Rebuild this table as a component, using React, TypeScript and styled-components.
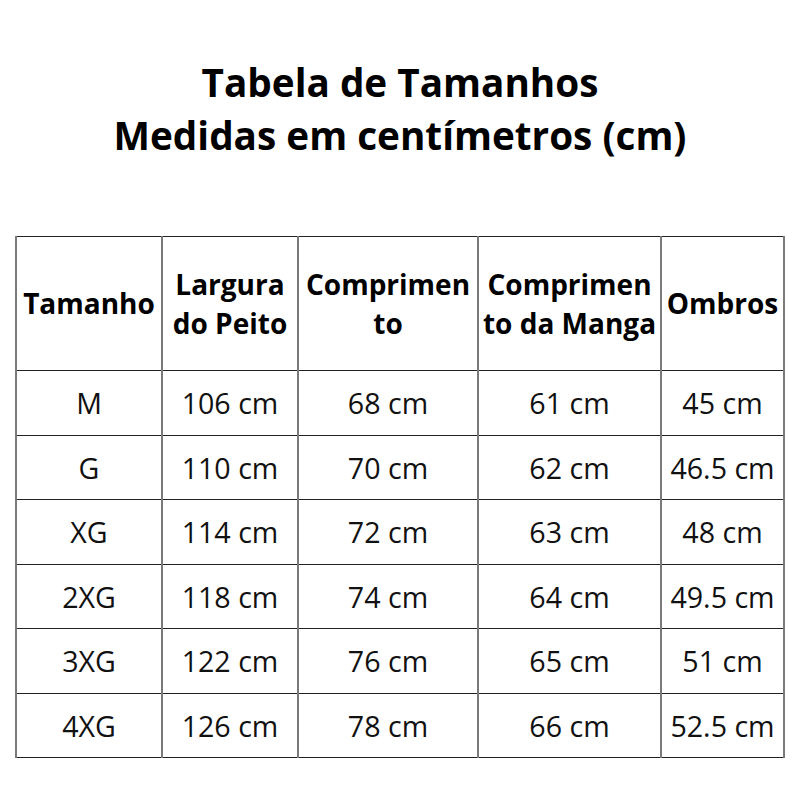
import React from "react";
import styled, { createGlobalStyle } from "styled-components";

const GlobalStyle = createGlobalStyle`
  html, body {
    margin: 0;
    padding: 0;
    background: #ffffff;
  }
  body {
    font-family: "Open Sans", "Liberation Sans", sans-serif;
    color: #000000;
  }
`;

const Page = styled.div`
  width: 800px;
  height: 800px;
  box-sizing: border-box;
  padding: 56px 15px 0 15px;
  display: flex;
  flex-direction: column;
  align-items: center;
`;

const Title = styled.h1`
  margin: 0;
  font-size: 38.7px;
  font-weight: 700;
  line-height: 53px;
  text-align: center;
  color: #000;
`;

const Table = styled.table`
  margin-top: 74px;
  width: 770px;
  border-collapse: collapse;
  table-layout: fixed;
`;

const HeadCell = styled.th`
  height: 133px;
  padding: 0;
  font-size: 28px;
  font-weight: 700;
  line-height: 39px;
  text-align: center;
  vertical-align: middle;
  border-top: 1px solid #222;
  border-bottom: 1px solid #222;
  border-left: 2px solid #7a7a7a;
  border-right: 2px solid #7a7a7a;
  white-space: nowrap;
`;

const Cell = styled.td`
  height: 63.5px;
  padding: 0;
  font-size: 28.6px;
  font-weight: 400;
  text-align: center;
  vertical-align: middle;
  border-top: 1px solid #222;
  border-bottom: 1px solid #222;
  border-left: 2px solid #7a7a7a;
  border-right: 2px solid #7a7a7a;
  color: #111;
  white-space: nowrap;
`;

const columns = [
  { label: ["Tamanho"], width: 146 },
  { label: ["Largura", "do Peito"], width: 136 },
  { label: ["Comprimen", "to"], width: 180 },
  { label: ["Comprimen", "to da Manga"], width: 183 },
  { label: ["Ombros"], width: 123 },
];

const rows = [
  ["M", "106 cm", "68 cm", "61 cm", "45 cm"],
  ["G", "110 cm", "70 cm", "62 cm", "46.5 cm"],
  ["XG", "114 cm", "72 cm", "63 cm", "48 cm"],
  ["2XG", "118 cm", "74 cm", "64 cm", "49.5 cm"],
  ["3XG", "122 cm", "76 cm", "65 cm", "51 cm"],
  ["4XG", "126 cm", "78 cm", "66 cm", "52.5 cm"],
];

export default function App() {
  return (
    <>
      <GlobalStyle />
      <Page>
        <Title>
          Tabela de Tamanhos
          <br />
          Medidas em centímetros (cm)
        </Title>
        <Table>
          <colgroup>
            {columns.map((c, i) => (
              <col key={i} style={{ width: c.width }} />
            ))}
          </colgroup>
          <thead>
            <tr>
              {columns.map((c, i) => (
                <HeadCell key={i}>
                  {c.label.map((l, j) => (
                    <React.Fragment key={j}>
                      {j > 0 && <br />}
                      {l}
                    </React.Fragment>
                  ))}
                </HeadCell>
              ))}
            </tr>
          </thead>
          <tbody>
            {rows.map((r, i) => (
              <tr key={i}>
                {r.map((v, j) => (
                  <Cell key={j}>{v}</Cell>
                ))}
              </tr>
            ))}
          </tbody>
        </Table>
      </Page>
    </>
  );
}
